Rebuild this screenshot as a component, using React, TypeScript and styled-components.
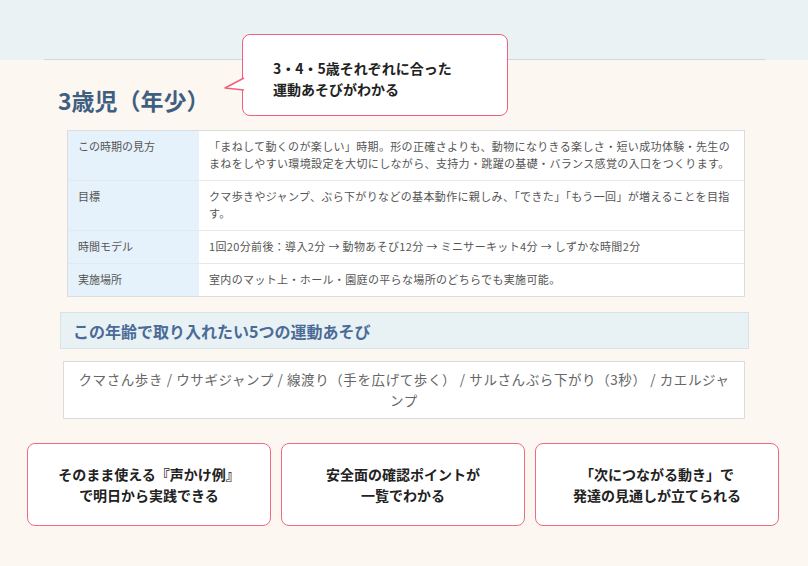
import React from "react";
import styled, { createGlobalStyle } from "styled-components";

const Global = createGlobalStyle`
  html, body { margin: 0; padding: 0; background: #fcf7f1; }
  body { font-family: "Noto Sans CJK JP", "Noto Sans", sans-serif; }
`;

const Page = styled.div`
  position: relative;
  width: 808px;
  height: 566px;
  overflow: hidden;
  background: #fcf7f1;
`;
const TopBand = styled.div`
  height: 60px;
  background: #eaf2f4;
  display: flex;
  align-items: flex-end;
  justify-content: center;
`;
const TopLine = styled.div`
  width: 721px;
  height: 1px;
  background: #cdd9e2;
`;
const Callout = styled.div`
  position: absolute;
  left: 242px;
  top: 34px;
  width: 266px;
  height: 82px;
  box-sizing: border-box;
  background: #fff;
  border: 1.5px solid #f0607e;
  border-radius: 8px;
  padding: 23px 0 0 30px;
  font-size: 14px;
  font-weight: 700;
  line-height: 21px;
  color: #222;
`;
const Tail = styled.svg`
  position: absolute;
  left: -20px;
  top: 42px;
`;
const Heading = styled.h1`
  margin: 25px 0 0 58px;
  font-size: 23px;
  font-weight: 700;
  color: #3f5f82;
  line-height: 30px;
  height: 30px;
`;
const Table = styled.div`
  margin: 15px 0 0 67px;
  width: 676px;
  border: 1px solid #dcdcdc;
  background: #fff;
  display: grid;
  grid-template-columns: 131px 1fr;
`;
const Label = styled.div<{ $last?: boolean }>`
  background: #e6f2fb;
  padding: 7px 10px;
  font-size: 11px;
  color: #555;
  line-height: 17px;
  border-bottom: ${(p) => (p.$last ? "none" : "1px solid #e8e8e8")};
`;
const Cell = styled.div<{ $last?: boolean }>`
  padding: 7px 9px 8px 10px;
  font-size: 11px;
  letter-spacing: 0.35px;
  color: #555;
  line-height: 17px;
  border-bottom: ${(p) => (p.$last ? "none" : "1px solid #e8e8e8")};
`;
const SectionBar = styled.div`
  margin: 15px 0 0 60px;
  width: 689px;
  height: 37px;
  box-sizing: border-box;
  border: 1px solid #d6e2e6;
  background: #e8f2f4;
  padding-left: 12px;
  display: flex;
  align-items: center;
  font-size: 16px;
  font-weight: 700;
  color: #4b6a98;
`;
const ListBox = styled.div`
  margin: 12px 0 0 63px;
  width: 682px;
  box-sizing: border-box;
  min-height: 58px;
  background: #fff;
  border: 1px solid #dcdcdc;
  padding: 7px 14px;
  text-align: center;
  font-size: 13.5px;
  letter-spacing: 0.6px;
  line-height: 21px;
  color: #666;
`;
const Cards = styled.div`
  margin: 24px 0 0 27px;
  display: grid;
  grid-template-columns: repeat(3, 244px);
  gap: 10px;
`;
const Card = styled.div`
  height: 83px;
  box-sizing: border-box;
  background: #fff;
  border: 1.5px solid #f06a84;
  border-radius: 8px;
  display: flex;
  align-items: center;
  justify-content: center;
  text-align: center;
  font-size: 14px;
  font-weight: 700;
  line-height: 21px;
  color: #222;
`;

const rows: [string, string][] = [
  ["この時期の見方", "「まねして動くのが楽しい」時期。形の正確さよりも、動物になりきる楽しさ・短い成功体験・先生のまねをしやすい環境設定を大切にしながら、支持力・跳躍の基礎・バランス感覚の入口をつくります。"],
  ["目標", "クマ歩きやジャンプ、ぶら下がりなどの基本動作に親しみ、「できた」「もう一回」が増えることを目指す。"],
  ["時間モデル", "1回20分前後：導入2分 → 動物あそび12分 → ミニサーキット4分 → しずかな時間2分"],
  ["実施場所", "室内のマット上・ホール・園庭の平らな場所のどちらでも実施可能。"],
];

export default function App() {
  return (
    <Page>
      <Global />
      <TopBand>
        <TopLine />
      </TopBand>
      <Heading>3歳児（年少）</Heading>
      <Table>
        {rows.map(([l, c], i) => (
          <React.Fragment key={l}>
            <Label $last={i === rows.length - 1}>{l}</Label>
            <Cell $last={i === rows.length - 1}>{c}</Cell>
          </React.Fragment>
        ))}
      </Table>
      <SectionBar>この年齢で取り入れたい5つの運動あそび</SectionBar>
      <ListBox>
        クマさん歩き / ウサギジャンプ / 線渡り（手を広げて歩く） / サルさんぶら下がり（3秒） / カエルジャンプ
      </ListBox>
      <Cards>
        <Card>そのまま使える『声かけ例』<br />で明日から実践できる</Card>
        <Card>安全面の確認ポイントが<br />一覧でわかる</Card>
        <Card>「次につながる動き」で<br />発達の見通しが立てられる</Card>
      </Cards>
      <Callout>
        <Tail width="22" height="16" viewBox="0 0 22 16">
          <path d="M21 1 L2 11 L21 13" fill="#fff" stroke="#f0607e" strokeWidth="1.5" strokeLinejoin="round" />
        </Tail>
        3・4・5歳それぞれに合った<br />運動あそびがわかる
      </Callout>
    </Page>
  );
}
